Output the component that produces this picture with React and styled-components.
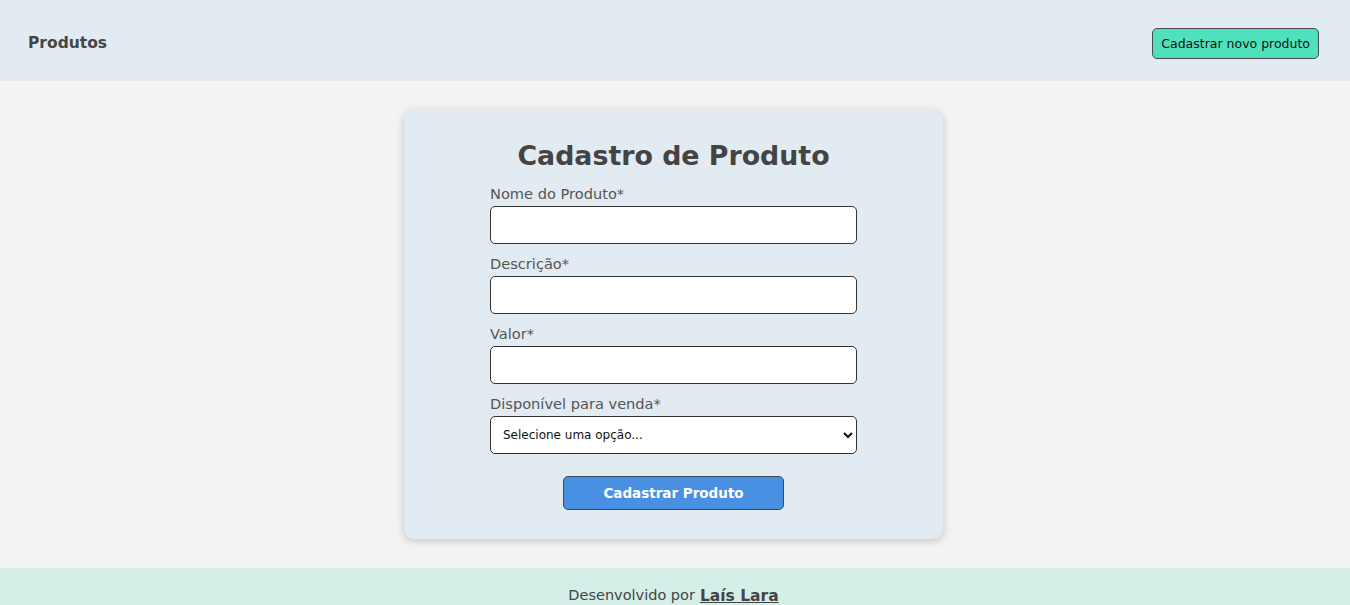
import React from 'react';
import styled, { createGlobalStyle } from 'styled-components';

const GlobalStyle = createGlobalStyle`
  * { box-sizing: border-box; }
  body {
    margin: 0;
    background-color: #f3f3f3;
    font-family: 'DejaVu Sans', 'Open Sans', sans-serif;
    color: #444;
  }
`;

const Header = styled.header`
  height: 81px;
  background-color: #e2eaf2;
  display: flex;
  align-items: center;
  justify-content: space-between;
  padding: 0 31px 0 28px;
`;

const Brand = styled.div`
  font-size: 15.5px;
  font-weight: 800;
  color: #454545;
  margin-top: 4px;
`;

const NewButton = styled.button`
  height: 31px;
  padding: 0 8px;
  background-color: #4fe0bc;
  border: 1px solid #4a4a4a;
  border-radius: 5px;
  font-family: inherit;
  font-size: 12.5px;
  color: #111;
  margin-top: 5px;
`;

const Main = styled.main`
  display: flex;
  justify-content: center;
  padding: 29px 3px 29px 0;
`;

const Card = styled.div`
  width: 539px;
  background-color: #e2eaf2;
  border-radius: 10px;
  box-shadow: 0 2px 8px rgba(0, 0, 0, 0.2);
  padding: 28px 0 29px;
  display: flex;
  flex-direction: column;
  align-items: center;
`;

const Title = styled.h1`
  margin: 0 0 10px;
  font-size: 26.8px;
  font-weight: 700;
  color: #444;
  line-height: 36px;
`;

const Form = styled.form`
  width: 367px;
  display: flex;
  flex-direction: column;
`;

const Field = styled.div`
  display: flex;
  flex-direction: column;
  margin-bottom: 10px;
`;

const Label = styled.label`
  font-size: 14.6px;
  color: #555;
  line-height: 20px;
  margin-bottom: 2px;
`;

const Input = styled.input`
  height: 38px;
  border: 1px solid #333;
  border-radius: 5px;
  background: #fff;
  padding: 0 12px;
  font-family: inherit;
`;

const Select = styled.select`
  height: 38px;
  border: 1px solid #333;
  border-radius: 5px;
  background: #fff;
  padding: 0 8px;
  font-family: inherit;
  font-size: 12px;
  color: #111;
`;

const Submit = styled.button`
  align-self: center;
  width: 221px;
  height: 34px;
  margin-top: 12px;
  background-color: #4a90e2;
  border: 1px solid #3b4a5a;
  border-radius: 5px;
  color: #fff;
  font-family: inherit;
  font-size: 13.5px;
  font-weight: 700;
`;

const Footer = styled.footer`
  background-color: #d4efe8;
  height: 60px;
  display: flex;
  justify-content: center;
  padding: 19px 3px 0 0;
  font-size: 14.5px;
  color: #444;
`;

const Author = styled.a`
  font-weight: 700;
  font-size: 15.5px;
  color: #444;
  text-decoration: underline;
  margin-left: 5px;
`;

const fields = [
  { name: 'nome', label: 'Nome do Produto*' },
  { name: 'descricao', label: 'Descrição*' },
  { name: 'valor', label: 'Valor*' },
];

const App = () => {
  return (
    <>
      <GlobalStyle />
      <Header>
        <Brand>Produtos</Brand>
        <NewButton>Cadastrar novo produto</NewButton>
      </Header>
      <Main>
        <Card>
          <Title>Cadastro de Produto</Title>
          <Form onSubmit={(e) => e.preventDefault()}>
            {fields.map((f) => (
              <Field key={f.name}>
                <Label htmlFor={f.name}>{f.label}</Label>
                <Input type="text" id={f.name} name={f.name} />
              </Field>
            ))}
            <Field>
              <Label htmlFor="disponivel">Disponível para venda*</Label>
              <Select id="disponivel" name="disponivel" defaultValue="">
                <option value="">Selecione uma opção...</option>
                <option value="sim">Sim</option>
                <option value="nao">Não</option>
              </Select>
            </Field>
            <Submit type="submit">Cadastrar Produto</Submit>
          </Form>
        </Card>
      </Main>
      <Footer>
        Desenvolvido por <Author href="#">Laís Lara</Author>
      </Footer>
    </>
  );
};

export default App;
